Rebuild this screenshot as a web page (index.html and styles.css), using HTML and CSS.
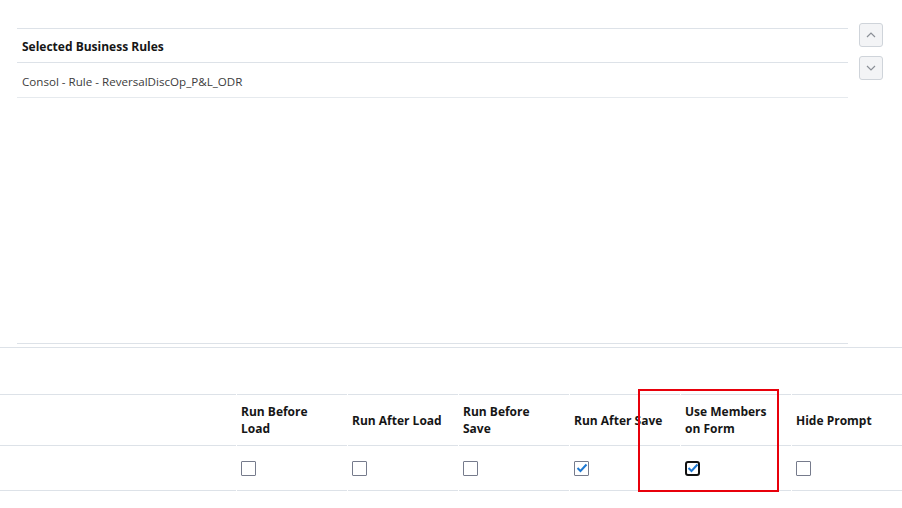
FILE: index.html
```html
<!DOCTYPE html>
<html lang="en">
<head>
	<meta charset="UTF-8" />
	<title>Business Rules</title>
	<link rel="stylesheet" href="styles.css">
</head>
<body>
	<div class="top">
		<div class="list">
			<div class="list-head">Selected Business Rules</div>
			<div class="list-row">Consol - Rule - ReversalDiscOp_P&amp;L_ODR</div>
		</div>
		<div class="moves">
			<button class="mv">
				<svg width="10" height="6" viewBox="0 0 10 6"><path d="M1 5 L5 1 L9 5" fill="none" stroke="#8b9097" stroke-width="1.2"/></svg>
			</button>
			<button class="mv">
				<svg width="10" height="6" viewBox="0 0 10 6"><path d="M1 1 L5 5 L9 1" fill="none" stroke="#8b9097" stroke-width="1.2"/></svg>
			</button>
		</div>
	</div>

	<table class="props">
		<colgroup>
			<col class="c-first"><col><col><col><col><col><col>
		</colgroup>
		<tr>
			<th></th>
			<th>Run Before<br>Load</th>
			<th>Run After Load</th>
			<th>Run Before<br>Save</th>
			<th>Run After Save</th>
			<th>Use Members<br>on Form</th>
			<th>Hide Prompt</th>
		</tr>
		<tr>
			<td></td>
			<td><span class="cb"></span></td>
			<td><span class="cb"></span></td>
			<td><span class="cb"></span></td>
			<td><span class="cb on"><svg width="12" height="10" viewBox="0 0 12 10"><path d="M1.5 5 L4.5 8 L10.5 1.5" fill="none" stroke="#1f78d1" stroke-width="2"/></svg></span></td>
			<td><span class="cb on focus"><svg width="12" height="10" viewBox="0 0 12 10"><path d="M1.5 5 L4.5 8 L10.5 1.5" fill="none" stroke="#1f78d1" stroke-width="2"/></svg></span></td>
			<td><span class="cb"></span></td>
		</tr>
	</table>

	<div class="mark"></div>
</body>
</html>
```

FILE: styles.css
```css
*{margin: 0;padding: 0;box-sizing: border-box;}
body{
	font-family: "Open Sans", "Liberation Sans", sans-serif;
	font-size: 12px;color: #161616;background: #fff;
	position: relative;width: 902px;height: 508px;overflow: hidden;
}
.top{
	display: flex;padding-top: 23px;
	border-bottom: 1px solid #dde2e8;
	padding-bottom: 3px;
}
.list{
	margin: 5px 0 0 17px;width: 831px;height: 316px;
	border-top: 1px solid #dde2e8;border-bottom: 1px solid #dde2e8;
}
.list-head{
	height: 34px;line-height: 35px;padding-left: 5px;
	font-weight: bold;border-bottom: 1px solid #dde2e8;
}
.list-row{
	height: 35px;line-height: 37px;padding-left: 5px;font-size: 11.6px;
	color: #3c3c3c;border-bottom: 1px solid #e6eaee;
}
.moves{
	margin-left: 11px;display: flex;flex-direction: column;gap: 9px;
}
.mv{
	width: 24px;height: 24px;border: 1px solid #cfd4da;border-radius: 3px;
	background: #f3f4f6;display: flex;align-items: center;justify-content: center;
}
.props{
	margin-top: 46px;border-collapse: separate;border-spacing: 1px 0;
	margin-left: -1px;table-layout: fixed;width: 904px;
}
.props col{width: 110px;}
.props col.c-first{width: 236px;}
.props th{
	height: 52px;text-align: left;vertical-align: middle;
	padding: 0 4px;line-height: 17px;font-weight: bold;
	border-top: 1px solid #dde2e8;border-bottom: 1px solid #dde2e8;
}
.props td{
	height: 45px;padding: 0 4px 0;vertical-align: middle;
	border-bottom: 1px solid #dde2e8;
}
.cb{
	display: block;width: 15px;height: 15px;
	border: 1px solid #767b8c;border-radius: 1px;background: #fff;
}
.cb svg{display: block;margin: 1px 0 0 1px;}
.cb.focus{border: 2px solid #111;border-radius: 3px;}
.cb.focus svg{margin: 0;}
.mark{
	position: absolute;left: 638px;top: 389px;width: 141px;height: 103px;
	border: 2px solid #e8000b;
}
```
